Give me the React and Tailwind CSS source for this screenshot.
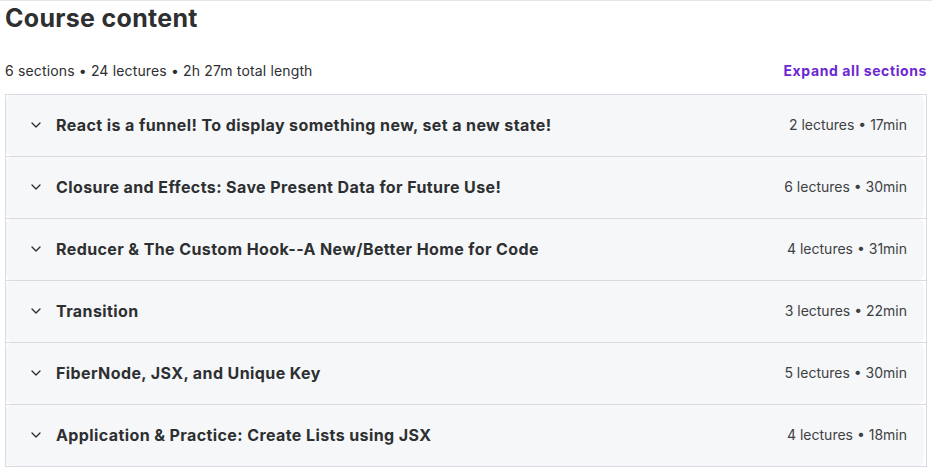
import React from 'react'
import { ChevronDown } from 'lucide-react'

const sections = [
  { title: 'React is a funnel! To display something new, set a new state!', meta: '2 lectures • 17min' },
  { title: 'Closure and Effects: Save Present Data for Future Use!', meta: '6 lectures • 30min' },
  { title: 'Reducer & The Custom Hook--A New/Better Home for Code', meta: '4 lectures • 31min' },
  { title: 'Transition', meta: '3 lectures • 22min' },
  { title: 'FiberNode, JSX, and Unique Key', meta: '5 lectures • 30min' },
  { title: 'Application & Practice: Create Lists using JSX', meta: '4 lectures • 18min' },
]

export default function App() {
  return (
    <div className="min-h-screen bg-white border-t border-[#e4e5ea] text-[#2d2f31] font-['Inter',sans-serif]">
      <div className="pl-[5px] pr-[5px]">
        {/* Header */}
        <h2 className="text-[25px] leading-[32px] font-bold tracking-[0.3px] pt-[1px]">Course content</h2>

        <div className="flex items-end justify-between mt-[27px] mb-[13px]">
          <span className="text-[14px] leading-[20px] tracking-[0.15px] text-[#2d2f31]">
            6 sections • 24 lectures • 2h 27m total length
          </span>
          <button className="text-[14px] leading-[20px] font-bold tracking-[0.6px] text-[#6d28d2]">
            Expand all sections
          </button>
        </div>

        {/* Sections */}
        <div className="border border-[#dadbe2] border-b-0">
          {sections.map((s) => (
            <div key={s.title} className="border-b border-[#dadbe2] pr-[2px]">
              <button className="w-full h-[61px] flex items-center bg-[#f6f7f9] rounded-md pl-[22px] pr-[17px] pb-[1px] text-left">
                <ChevronDown className="w-[16px] h-[16px] text-[#2d2f31] mr-[12px]" strokeWidth={2} />
                <span className="flex-1 text-[16px] leading-[24px] font-bold tracking-[0.4px]">{s.title}</span>
                <span className="text-[14px] leading-[20px] text-[#3e4143]">{s.meta}</span>
              </button>
            </div>
          ))}
        </div>
      </div>
    </div>
  )
}
